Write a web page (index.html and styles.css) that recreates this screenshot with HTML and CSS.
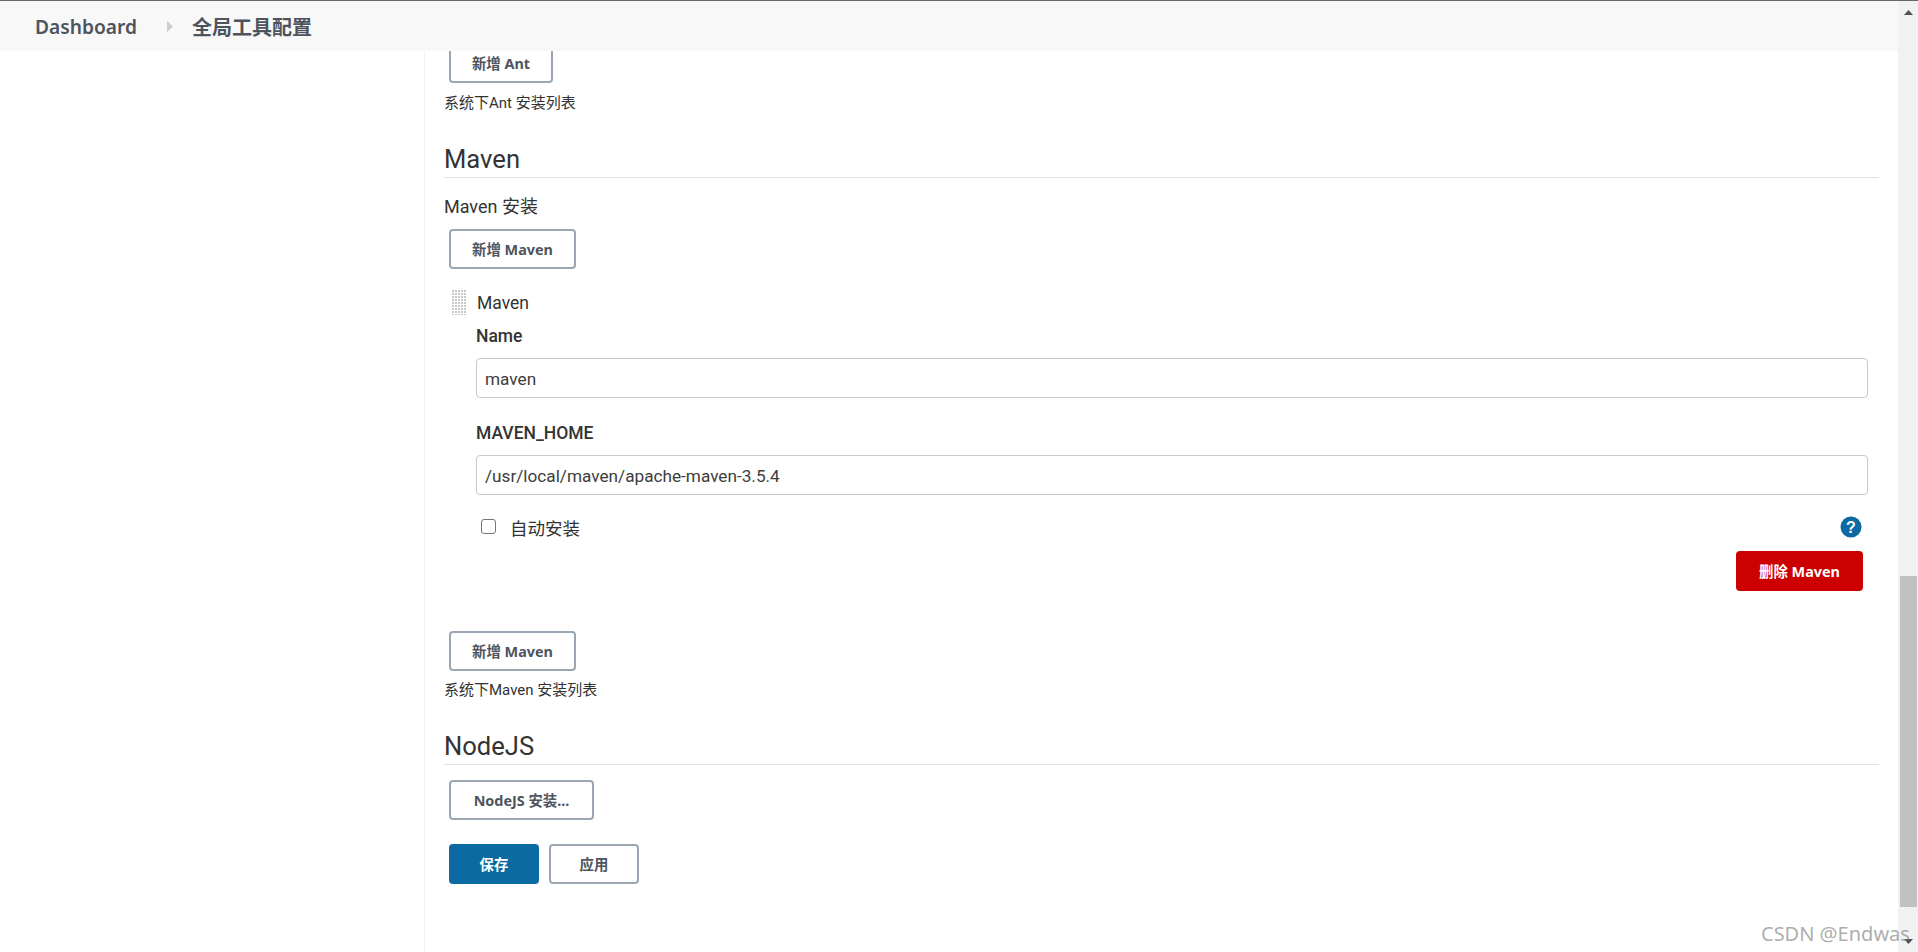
FILE: index.html
```html
<!DOCTYPE html>
<html lang="zh">
<head>
<meta charset="utf-8">
<title>全局工具配置</title>
<link rel="stylesheet" href="styles.css">
</head>
<body>
<div class="window">
  <div class="page">
    <header class="topbar">
      <span class="crumb">Dashboard</span>
      <svg class="crumb-arrow" width="6" height="11" viewBox="0 0 6 11"><path d="M0 0l6 5.5L0 11z" fill="#c9cdd1"/></svg>
      <span class="crumb crumb-cjk">全局工具配置</span>
    </header>
    <div class="layout">
      <aside class="side"></aside>
      <main class="main">
        <div class="clip">
          <button class="btn btn-ant" type="button">新增 Ant</button>
        </div>
        <p class="help help-ant">系统下Ant 安装列表</p>

        <h2 class="section">Maven</h2>
        <div class="inst-label">Maven 安装</div>
        <button class="btn btn-first" type="button">新增 Maven</button>

        <div class="tool">
          <div class="tool-head">
            <span class="handle"></span>
            <span class="tool-name">Maven</span>
          </div>
          <div class="tool-body">
            <label class="field-label label-name">Name</label>
            <input class="text" type="text" value="maven">
            <label class="field-label label-home">MAVEN_HOME</label>
            <input class="text" type="text" value="/usr/local/maven/apache-maven-3.5.4">
            <div class="check-row">
              <input class="check" type="checkbox">
              <span class="check-label">自动安装</span>
              <svg class="help-icon" width="22" height="22" viewBox="0 0 22 22"><circle cx="11" cy="11" r="10.5" fill="#0b6aa2"/><text x="11" y="16.5" text-anchor="middle" class="help-mark">?</text></svg>
            </div>
            <div class="del-row">
              <button class="btn btn-danger" type="button">删除 Maven</button>
            </div>
          </div>
        </div>

        <button class="btn btn-second" type="button">新增 Maven</button>
        <p class="help help-maven">系统下Maven 安装列表</p>

        <h2 class="section section-node">NodeJS</h2>
        <button class="btn btn-node" type="button">NodeJS 安装...</button>

        <div class="actions">
          <button class="btn btn-primary" type="button">保存</button>
          <button class="btn btn-apply" type="button">应用</button>
        </div>
      </main>
    </div>
  </div>
  <div class="scrollbar">
    <svg class="sb-arrow" width="9" height="5" viewBox="0 0 9 5"><path d="M4.5 0L9 5H0z" fill="#505050"/></svg>
    <div class="sb-track"><div class="sb-thumb"></div></div>
    <svg class="sb-arrow" width="9" height="5" viewBox="0 0 9 5"><path d="M0 0h9L4.5 5z" fill="#505050"/></svg>
  </div>
  <div class="watermark">CSDN @Endwas</div>
</div>
</body>
</html>
```
FILE: styles.css
```css
* { box-sizing: border-box; }
html, body { margin: 0; height: 100%; overflow: hidden; background: #fff; }
body {
  font-family: Roboto, "Noto Sans CJK SC", sans-serif;
  color: #333;
  font-size: 17.5px;
}
.window { display: flex; height: 952px; width: 1918px; border-top: 1px solid #666; position: relative; }
.page { width: 1898px; display: flex; flex-direction: column; }

.topbar {
  height: 50px;
  flex: none;
  background: #f8f8f8;
  display: flex;
  align-items: center;
  padding-left: 35px;
  padding-top: 2px;
  color: #4d545d;
  position: relative;
  z-index: 1;
}
.crumb { font-size: 19.2px; font-weight: 600; line-height: 24px; font-family: "Noto Sans", "Noto Sans CJK SC", sans-serif; }
.crumb-arrow { margin-left: 30px; margin-right: 19px; margin-top: -2px; }
.crumb-cjk { font-size: 20px; font-family: "Noto Sans CJK SC", sans-serif; font-weight: 700; }

.layout { flex: 1; display: flex; min-height: 0; }
.side { width: 425px; flex: none; border-right: 1px solid #eef0f2; }
.main { width: 1435px; margin-left: 19px; min-width: 0; }

.clip { height: 32px; overflow: hidden; display: flex; align-items: flex-end; padding-left: 5px; }

.btn {
  display: block;
  height: 40px;
  padding: 2px 0 0;
  border: 2px solid #9aa7b3;
  border-radius: 4px;
  background: #fff;
  color: #4d545d;
  font-family: "Noto Sans", "Noto Sans CJK SC", sans-serif;
  font-size: 14.4px;
  font-weight: 700;
  line-height: 1;
  white-space: nowrap;
}
.btn-ant { width: 104px; flex: none; }
.btn-first, .btn-second, .btn-node { margin-left: 5px; }
.btn-first, .btn-second { width: 127px; }
.btn-first { margin-top: 10px; }
.btn-second { margin-top: 40px; }
.btn-node { width: 145px; margin-top: 15px; }

.help { margin: 0; font-size: 15px; line-height: 18px; color: #333; }
.help-ant { margin-top: 11px; }
.help-maven { margin-top: 10px; }

.section {
  margin: 0;
  font-size: 25.6px;
  font-weight: 400;
  line-height: 38px;
  color: #333;
  border-bottom: 1px solid #e0e2e5;
  height: 38px;
}
.help-ant + .section { margin-top: 28px; }
.section-node { margin-top: 28px; }

.inst-label { margin-top: 17px; font-size: 18px; line-height: 24px; font-weight: 400; color: #333; }

.tool { margin-left: 8px; margin-top: 21px; }
.tool-head { display: flex; align-items: center; height: 25px; }
.handle {
  width: 15px;
  height: 25px;
  flex: none;
  background-image: radial-gradient(circle at 1px 1px, #c8c8c8 0.9px, transparent 1px);
  background-size: 3px 3px;
}
.tool-name { margin-left: 10px; font-size: 17.5px; line-height: 24px; color: #333; }
.tool-body { margin-left: 24px; width: 1392px; }
.field-label { display: block; font-size: 17.5px; line-height: 24px; font-weight: 500; color: #333; }
.label-name { margin-top: 9px; }
.label-home { margin-top: 23px; }
.text {
  display: block;
  width: 100%;
  height: 40px;
  margin-top: 10px;
  padding: 2px 8px 0;
  border: 1.5px solid #c6c8ca;
  border-radius: 4px;
  font-family: Roboto, "Noto Sans CJK SC", sans-serif;
  font-size: 17.2px;
  color: #3d3d3d;
  background: #fff;
  outline: none;
}
.check-row { display: flex; align-items: center; height: 24px; margin-top: 21px; padding-right: 6px; }
.check {
  appearance: none;
  width: 15px;
  height: 15px;
  margin: 0 0 3px 5px;
  border: 1px solid #767676;
  border-radius: 3px;
  background: #fff;
  flex: none;
}
.check-label { margin-left: 14px; font-size: 17.5px; line-height: 24px; color: #333; font-family: "Noto Sans CJK SC", sans-serif; }
.help-icon { margin-left: auto; margin-top: -2px; }
.help-mark { font-family: "Liberation Sans", sans-serif; font-size: 16px; font-weight: 700; fill: #fff; }
.del-row { display: flex; justify-content: flex-end; margin-top: 11px; padding-right: 5px; }
.btn-danger { width: 127px; background: #c00; border-color: #c00; color: #fff; }

.actions { display: flex; gap: 10px; margin-left: 5px; margin-top: 24px; }
.btn-primary, .btn-apply { width: 90px; }
.btn-primary { background: #0b6aa2; border-color: #0b6aa2; color: #fff; }

.scrollbar {
  width: 20px;
  flex: none;
  background: #f1f1f1;
  display: flex;
  flex-direction: column;
  align-items: center;
  height: 951px;
  padding: 9px 1px 8px 2px;
}
.sb-arrow { flex: none; }
.sb-track { flex: 1; width: 17px; padding-top: 561px; }
.sb-thumb { height: 331px; background: #c1c1c1; }

.watermark {
  position: absolute;
  left: 1761px;
  top: 919px;
  font-family: "Noto Sans", sans-serif;
  font-size: 20px;
  line-height: 27px;
  color: rgba(120, 120, 120, 0.62);
  white-space: nowrap;
  z-index: 2;
}
```
